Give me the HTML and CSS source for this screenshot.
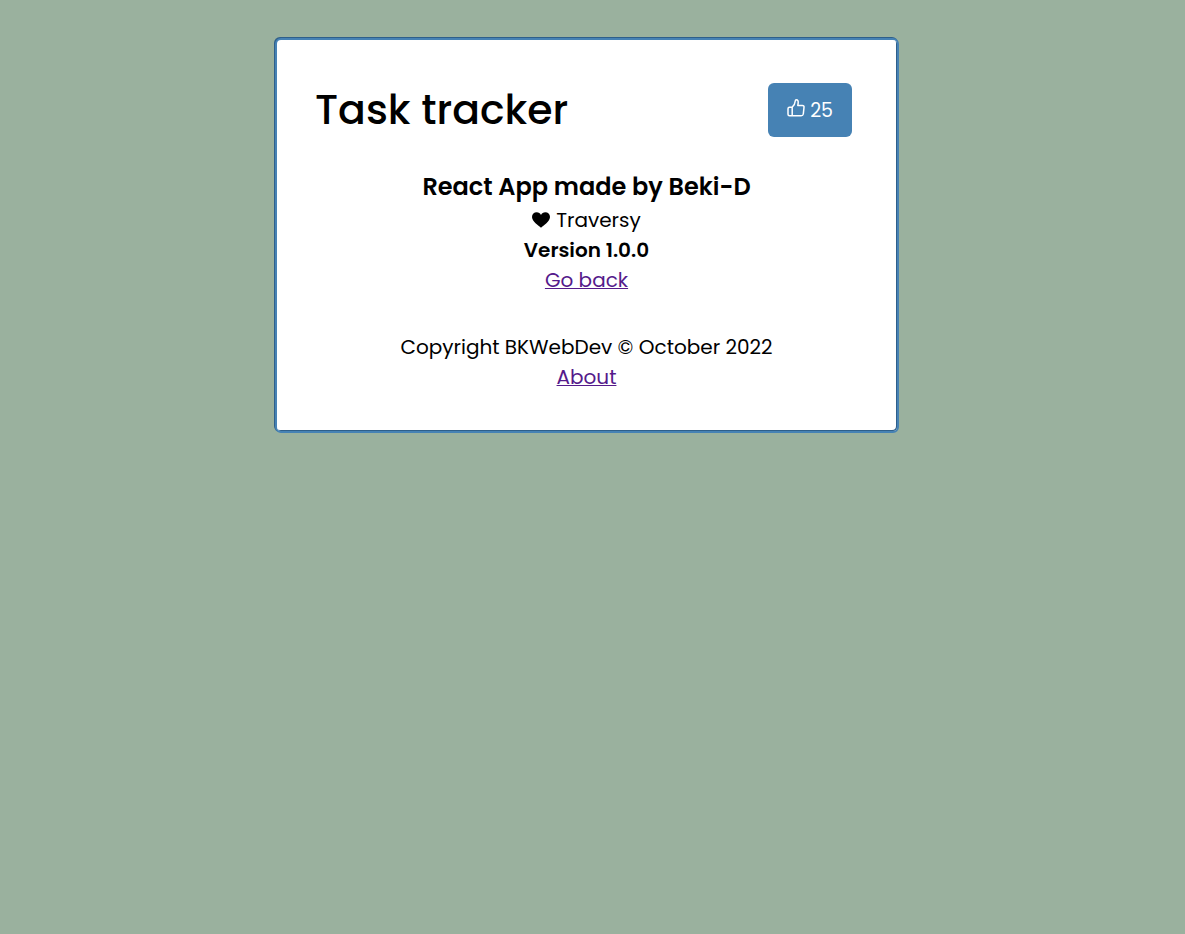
FILE: index.html
```html
<!DOCTYPE html>
<html lang="en">
<head>
<meta charset="utf-8">
<meta name="viewport" content="width=device-width, initial-scale=1">
<title>Task tracker</title>
<link rel="stylesheet" href="styles.css">
</head>
<body>
<main class="container">
  <header class="header">
    <h1 class="title">Task tracker</h1>
    <button class="btn" type="button">
      <svg class="icon" viewBox="0 0 18 18" aria-hidden="true" fill="none" stroke="currentColor" stroke-width="1.5" stroke-linejoin="round" stroke-linecap="round"><path d="M1 9.7Q1 8.2 2.5 8.2H5.2V16.8H2.5Q1 16.8 1 15.3ZM5.2 8.2C7.4 6.4 8 4.6 8.2 2.2Q8.3.8 9.3.8C10.9.8 11.3 2 11.2 3.6L10.8 6.6H15.4Q17.3 6.6 17 8.4L16.3 15Q16 16.8 14.2 16.8H5.2"/></svg>
      <span>25</span>
    </button>
  </header>
  <section class="about">
    <h3 class="subtitle">React App made by Beki-D</h3>
    <p class="line credit">
      <svg class="icon heart" viewBox="0 0 18 18" aria-hidden="true" fill="currentColor"><path d="M9 16.7C6.5 14.8 0 10.2 0 6C0 3 2.1 1.3 4.7 1.3C6.6 1.3 8.2 2.3 9 4C9.8 2.3 11.4 1.3 13.3 1.3C15.9 1.3 18 3 18 6C18 10.2 11.5 14.8 9 16.7Z"/></svg>
      <span>Traversy</span>
    </p>
    <h4 class="line version">Version 1.0.0</h4>
    <a class="line" href="#home">Go back</a>
  </section>
  <footer class="footer">
    <p class="line">Copyright BKWebDev © October 2022</p>
    <a class="line" href="#about">About</a>
  </footer>
</main>
</body>
</html>
```
FILE: styles.css
```css
* {
  box-sizing: border-box;
  margin: 0;
  padding: 0;
}

body {
  padding: 38px 11px 38px 0;
  background: #9ab19e;
  color: #000;
  font-family: Poppins, Inter, sans-serif;
  font-size: 20px;
  line-height: 30px;
}

/* Grooved edge: darker line outside at top left, inside at bottom right */
.container {
  max-width: 624px;
  margin: 0 auto;
  padding: 43px 39px 39px 38px;
  border: 2px solid steelblue;
  border-radius: 6px;
  background: #fff;
  box-shadow: -1px -1px 0 #2f5f8a, inset -1px -1px 0 #2f5f8a;
}

.header {
  display: flex;
  align-items: center;
  justify-content: space-between;
  padding-right: 6px;
  margin-bottom: 31px;
}

.title {
  font-size: 41px;
  font-weight: 500;
  line-height: 54px;
}

.btn {
  display: flex;
  align-items: center;
  gap: 5px;
  padding: 13px 19px 11px;
  border: 0;
  border-radius: 6px;
  background: steelblue;
  color: #fff;
  font-family: inherit;
  font-size: 19px;
  line-height: 30px;
  cursor: pointer;
}

.icon {
  width: 18px;
  height: 18px;
  margin-bottom: 6px;
}

.about,
.footer {
  display: flex;
  flex-direction: column;
  align-items: center;
  text-align: center;
}

.subtitle {
  font-size: 24px;
  font-weight: 600;
  line-height: 37px;
}

.credit {
  display: flex;
  align-items: center;
  gap: 6px;
}

.heart {
  margin-bottom: 0;
}

.version {
  font-size: 20px;
  font-weight: 600;
}

.footer {
  margin-top: 37px;
}

a {
  color: #551a8b;
  text-decoration-thickness: 1px;
}
```
